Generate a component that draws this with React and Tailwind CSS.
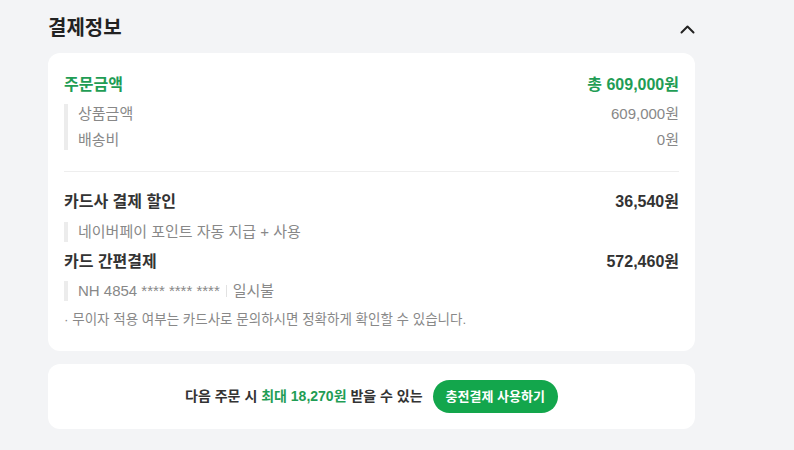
import React from 'react';

const FONT = { fontFamily: '"Liberation Sans", "Noto Sans CJK KR", sans-serif' };

const SubRow = ({ children }) => (
  <div className="flex items-center h-5 text-[15px] text-[#888]">{children}</div>
);

const SubGroup = ({ children, className = '' }) => (
  <div className={`flex flex-col gap-[6px] border-l-4 border-[#ececec] pl-[10px] ${className}`}>{children}</div>
);

const ChevronUp = () => (
  <svg width="15" height="14" viewBox="0 0 15 14" fill="none" stroke="#222" strokeWidth="2" strokeLinecap="round" strokeLinejoin="round">
    <path d="M1.5 10.5 L7.5 4.5 L13.5 10.5" />
  </svg>
);

export default function App() {
  return (
    <div className="min-h-[450px] w-[794px] bg-[#f3f4f6] overflow-hidden" style={FONT}>
      <div className="ml-12 w-[647px] pt-[15px]">
        <div className="flex items-center justify-between h-[26px]">
          <h2 className="text-[20px] font-bold text-[#222] leading-[26px]">결제정보</h2>
          <span className="mt-[2px]">
            <ChevronUp />
          </span>
        </div>

        <div className="mt-3 bg-white rounded-xl px-4 pt-[21px] pb-[22px]">
          <div className="flex items-center justify-between h-[22px] text-[16px] font-bold text-[#1f9d55]">
            <span>주문금액</span>
            <span>총 609,000원</span>
          </div>
          <SubGroup className="mt-[8px]">
            <SubRow>
              <span className="flex-1">상품금액</span>
              <span>609,000원</span>
            </SubRow>
            <SubRow>
              <span className="flex-1">배송비</span>
              <span>0원</span>
            </SubRow>
          </SubGroup>

          <div className="mt-[21px] border-t border-[#eeeeee]" />

          <div className="mt-[19px] flex items-center justify-between h-[22px] text-[16px] font-bold text-[#333]">
            <span>카드사 결제 할인</span>
            <span>36,540원</span>
          </div>
          <SubGroup className="mt-[9px]">
            <SubRow>네이버페이 포인트 자동 지급 + 사용</SubRow>
          </SubGroup>

          <div className="mt-[9px] flex items-center justify-between h-[22px] text-[16px] font-bold text-[#333]">
            <span>카드 간편결제</span>
            <span>572,460원</span>
          </div>
          <SubGroup className="mt-[8px]">
            <SubRow>
              <span>NH 4854 **** **** ****</span>
              <span className="mx-[6px] h-3 w-px bg-[#e2e2e2]" />
              <span>일시불</span>
            </SubRow>
          </SubGroup>

          <p className="mt-[10px] h-[18px] leading-[18px] text-[13.5px] text-[#888]">· 무이자 적용 여부는 카드사로 문의하시면 정확하게 확인할 수 있습니다.</p>
        </div>

        <div className="mt-[13px] bg-white rounded-xl h-[65px] flex items-center justify-center gap-[10px]">
          <p className="text-[14px] font-bold text-[#333]">
            다음 주문 시 <span className="text-[#1f9d55]">최대 18,270원</span> 받을 수 있는
          </p>
          <button className="h-[33px] px-[13px] rounded-full bg-[#13a64c] text-white text-[13px] font-bold">
            충전결제 사용하기
          </button>
        </div>
      </div>
    </div>
  );
}
